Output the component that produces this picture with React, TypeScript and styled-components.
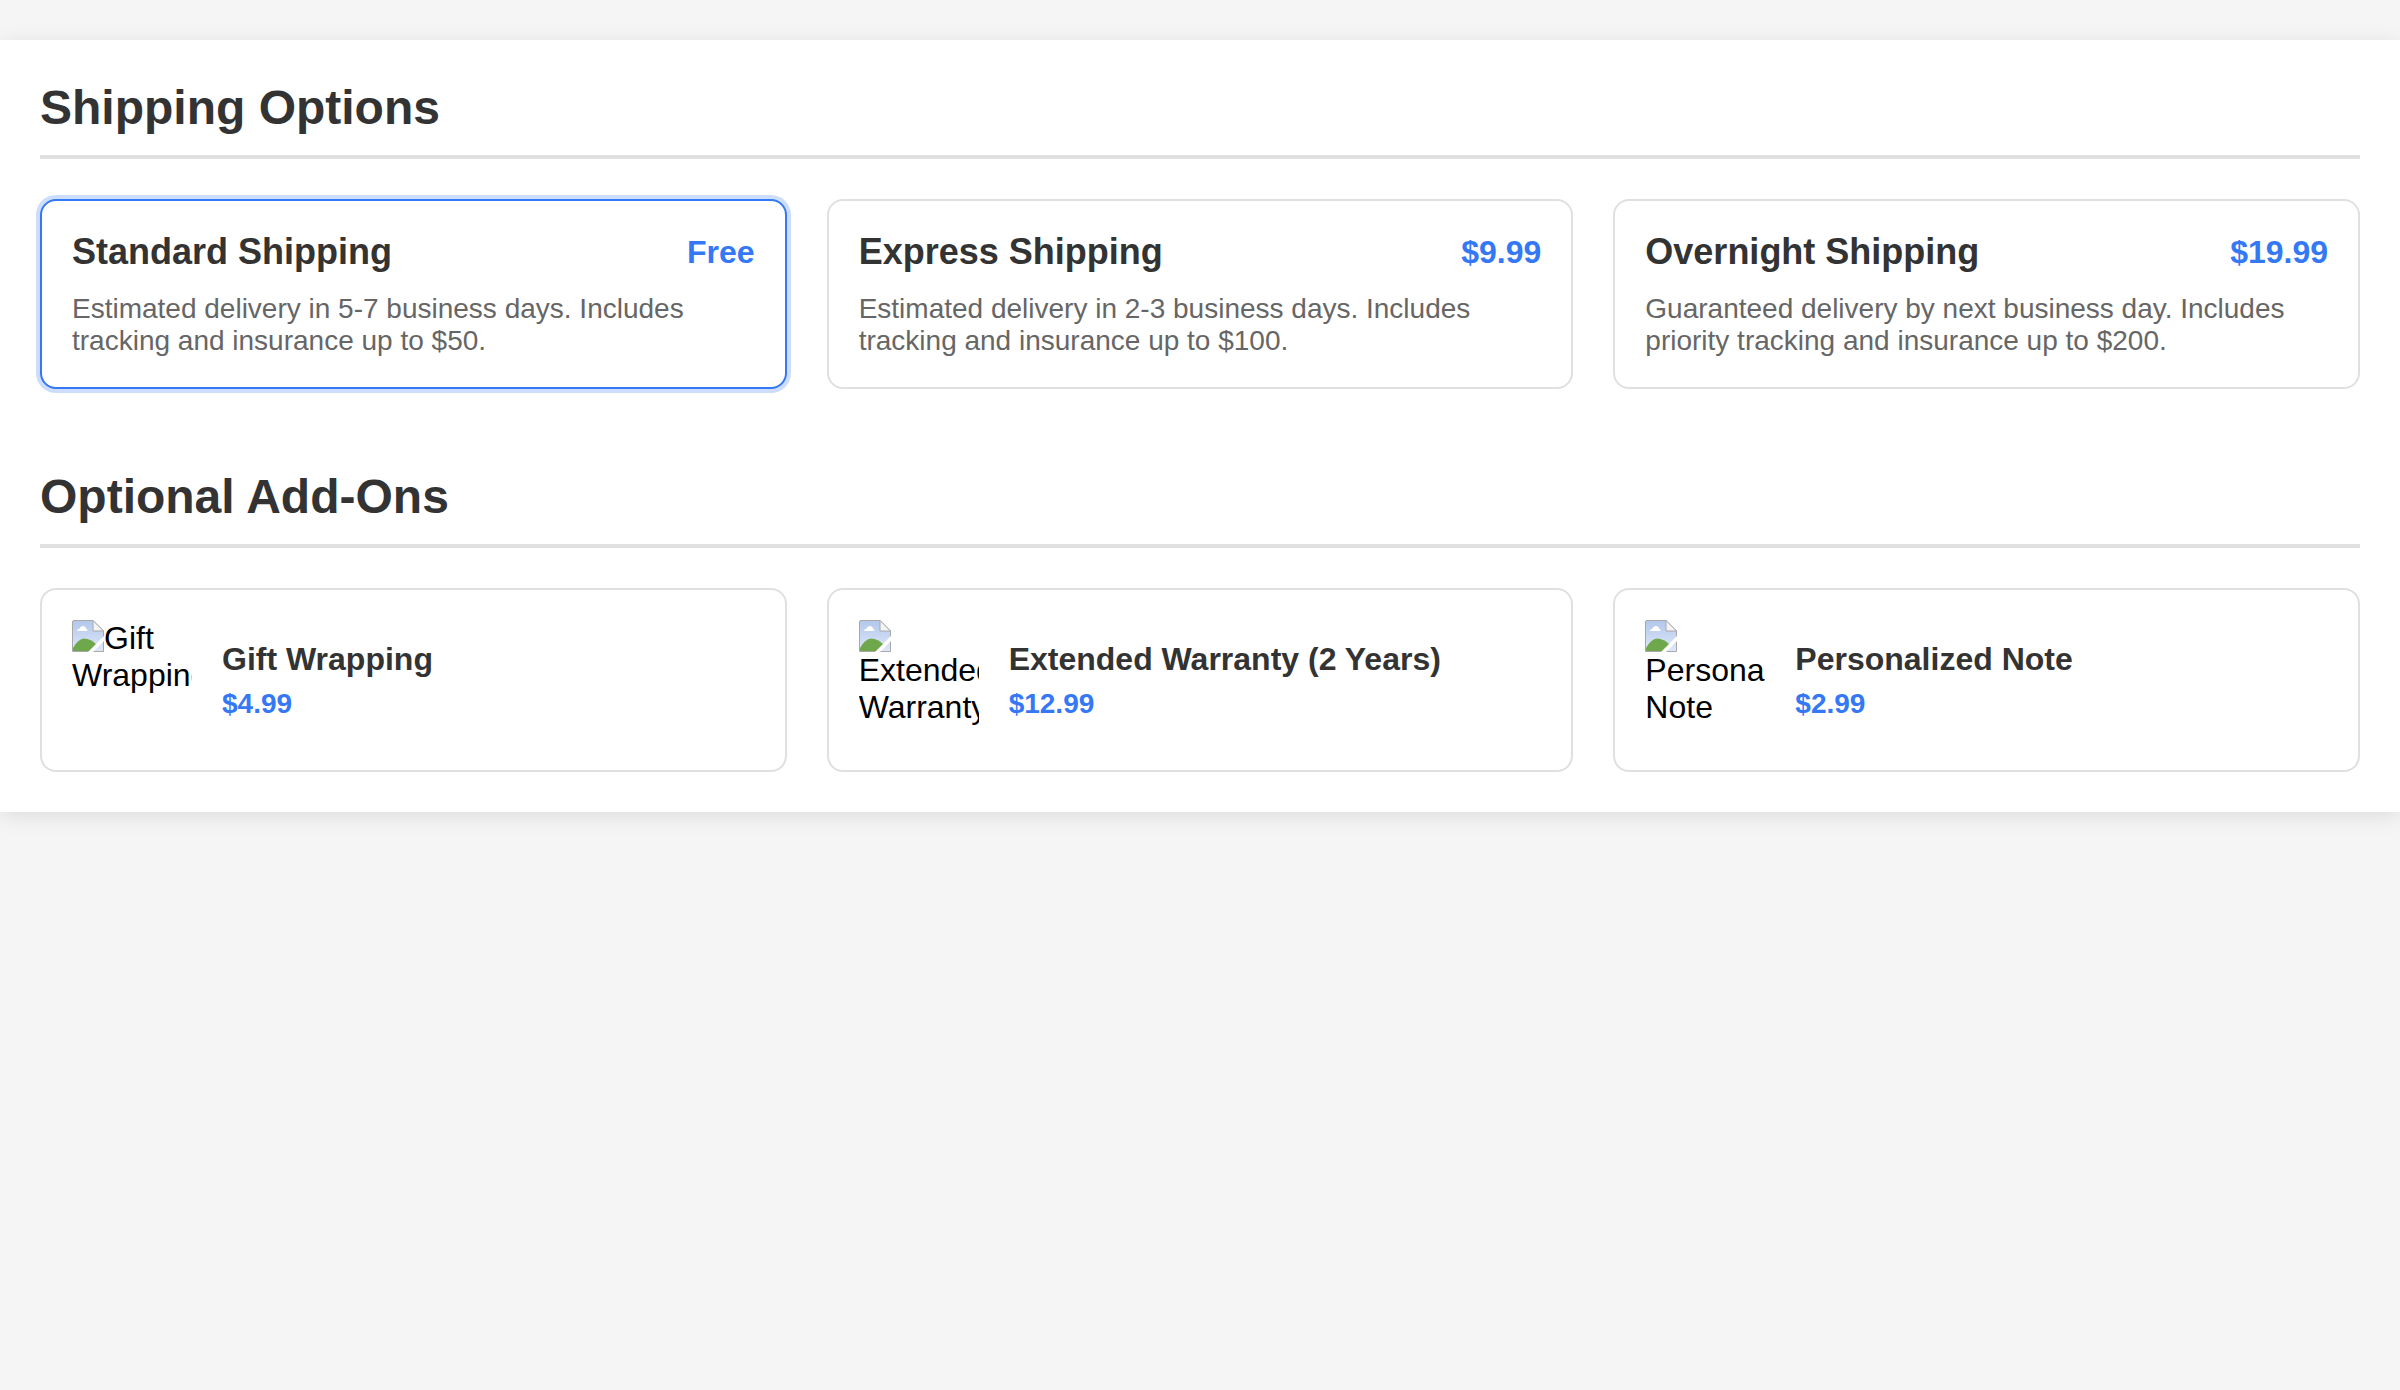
import React from "react";
import styled, { createGlobalStyle } from "styled-components";

const Global = createGlobalStyle`
  html, body { margin: 0; padding: 0; background: #f5f5f5; }
  body { font-family: "Liberation Sans", Arial, sans-serif; min-height: 1390px; }
`;

const Page = styled.div`
  padding-top: 40px;
`;

const Panel = styled.main`
  background: #fff;
  padding: 40px;
  box-shadow: 0 4px 20px rgba(0, 0, 0, 0.1);
  display: flex;
  flex-direction: column;
  gap: 80px;
`;

const Section = styled.section`
  display: flex;
  flex-direction: column;
  gap: 40px;
`;

const Heading = styled.h2`
  margin: 0;
  padding-bottom: 20px;
  border-bottom: 4px solid #e0e0e0;
  font-size: 48px;
  font-weight: 700;
  color: #333;
`;

const Grid = styled.div`
  display: grid;
  grid-template-columns: repeat(3, 1fr);
  gap: 40px;
`;

const Card = styled.article<{ $selected?: boolean }>`
  border: 2px solid ${(p) => (p.$selected ? "#3478f6" : "#e0e0e0")};
  border-radius: 16px;
  padding: 30px;
  background: #fff;
  box-shadow: ${(p) => (p.$selected ? "0 0 0 4px rgba(52, 120, 246, 0.25)" : "none")};
`;

const CardHeader = styled.div`
  display: flex;
  justify-content: space-between;
  align-items: center;
  margin-bottom: 20px;
`;

const CardTitle = styled.h3`
  margin: 0;
  font-size: 36px;
  font-weight: 700;
  color: #333;
`;

const CardPrice = styled.span`
  font-size: 32px;
  font-weight: 700;
  color: #3478f6;
`;

const CardText = styled.p`
  margin: 0;
  font-size: 28px;
  color: #666;
`;

const AddOnCard = styled(Card)`
  display: flex;
  align-items: center;
  gap: 30px;
`;

const BrokenImage = styled.div`
  flex: none;
  width: 120px;
  height: 120px;
  overflow: hidden;
  font-size: 32px;
  color: #000;
`;

const BrokenIcon = styled.svg`
  float: left;
  width: 32px;
  height: 32px;
`;

const AddOnInfo = styled.div`
  display: flex;
  flex-direction: column;
  gap: 10px;
`;

const AddOnName = styled.h3`
  margin: 0;
  font-size: 32px;
  font-weight: 700;
  color: #333;
`;

const AddOnPrice = styled.span`
  font-size: 28px;
  font-weight: 700;
  color: #3478f6;
`;

const Broken = ({ id }: { id: string }) => (
  <BrokenIcon viewBox="0 0 32 32" aria-hidden="true">
    <defs>
      <linearGradient id={id} x1="0" y1="0" x2="0" y2="1">
        <stop offset="0" stopColor="#b2c7ec" />
        <stop offset="1" stopColor="#dfe8f8" />
      </linearGradient>
    </defs>
    <path d="M0.5 2 Q0.5 0.5 2 0.5 H21 L31.5 11 V31.5 H0.5 Z" fill={`url(#${id})`} stroke="#a8a8a8" strokeWidth="1" />
    <path d="M21 0.5 V11 H31.5 Z" fill="#f4f4f4" stroke="#a8a8a8" strokeWidth="1" />
    <path d="M5 11 q0 -2 2.5 -2.5 q1 -3 4 -2.5 q2.5 0.5 2.5 2.5 q1.5 0.5 1.5 2.5 Z" fill="#fff" />
    <path d="M1 31 V28 Q6 19 12 18.5 Q19 18.5 25 25 L19 31 Z" fill="#6fa84c" />
    <path d="M16 32 L32 16 V21 L21 32 Z" fill="#fff" />
  </BrokenIcon>
);

const shipping = [
  { name: "Standard Shipping", price: "Free", text: "Estimated delivery in 5-7 business days. Includes tracking and insurance up to $50.", selected: true },
  { name: "Express Shipping", price: "$9.99", text: "Estimated delivery in 2-3 business days. Includes tracking and insurance up to $100." },
  { name: "Overnight Shipping", price: "$19.99", text: "Guaranteed delivery by next business day. Includes priority tracking and insurance up to $200." },
];

const addOns = [
  { id: "sky-gift", name: "Gift Wrapping", price: "$4.99" },
  { id: "sky-warranty", name: "Extended Warranty (2 Years)", alt: "Extended Warranty", price: "$12.99" },
  { id: "sky-note", name: "Personalized Note", price: "$2.99" },
];

export default function App() {
  return (
    <Page>
      <Global />
      <Panel>
        <Section>
          <Heading>Shipping Options</Heading>
          <Grid>
            {shipping.map((s) => (
              <Card key={s.name} $selected={s.selected}>
                <CardHeader>
                  <CardTitle>{s.name}</CardTitle>
                  <CardPrice>{s.price}</CardPrice>
                </CardHeader>
                <CardText>{s.text}</CardText>
              </Card>
            ))}
          </Grid>
        </Section>
        <Section>
          <Heading>Optional Add-Ons</Heading>
          <Grid>
            {addOns.map((a) => (
              <AddOnCard key={a.name}>
                <BrokenImage>
                  <Broken id={a.id} />
                  {a.alt ?? a.name}
                </BrokenImage>
                <AddOnInfo>
                  <AddOnName>{a.name}</AddOnName>
                  <AddOnPrice>{a.price}</AddOnPrice>
                </AddOnInfo>
              </AddOnCard>
            ))}
          </Grid>
        </Section>
      </Panel>
    </Page>
  );
}
